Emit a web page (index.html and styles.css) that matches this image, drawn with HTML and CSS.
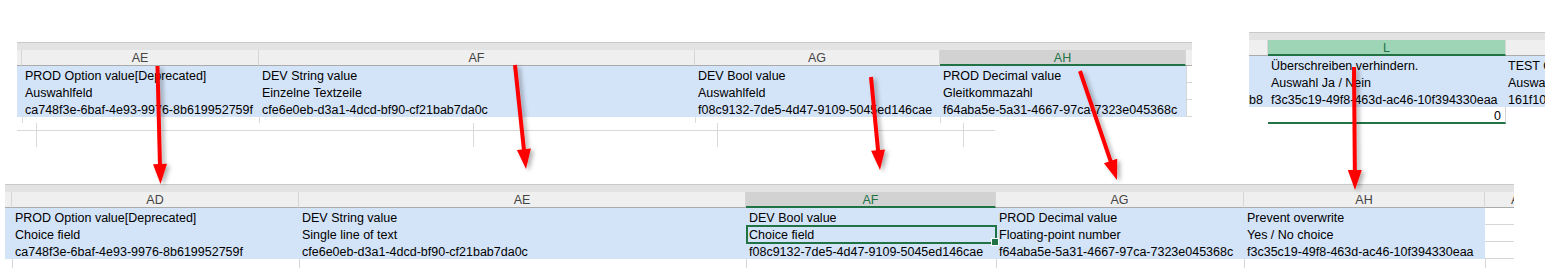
FILE: index.html
```html
<!DOCTYPE html>
<html lang="de">
<head>
<meta charset="utf-8">
<title>Column mapping</title>
<link rel="stylesheet" href="styles.css">
</head>
<body>
<div class="top">
  <section class="sheet sheet-a">
    <div class="band"></div>
    <div class="grid grid-a">
      <div class="hc"></div>
      <div class="hc">AE</div>
      <div class="hc">AF</div>
      <div class="hc">AG</div>
      <div class="hc hc-sel">AH</div>
      <div class="hc hc-plain"></div>

      <div class="c s"></div>
      <div class="c s">PROD Option value[Deprecated]</div>
      <div class="c s">DEV String value</div>
      <div class="c s">DEV Bool value</div>
      <div class="c s">PROD Decimal value</div>
      <div class="c gl"></div>

      <div class="c s"></div>
      <div class="c s">Auswahlfeld</div>
      <div class="c s">Einzelne Textzeile</div>
      <div class="c s">Auswahlfeld</div>
      <div class="c s">Gleitkommazahl</div>
      <div class="c gl"></div>

      <div class="c s"></div>
      <div class="c s">ca748f3e-6baf-4e93-9976-8b619952759f</div>
      <div class="c s">cfe6e0eb-d3a1-4dcd-bf90-cf21bab7da0c</div>
      <div class="c s">f08c9132-7de5-4d47-9109-5045ed146cae</div>
      <div class="c s">f64aba5e-5a31-4667-97ca-7323e045368c</div>
      <div class="c gl"></div>
    </div>
    <div class="below">
      <div class="ticks"><span></span><span></span><span></span><span></span><span></span></div>
      <div class="lower">
        <span></span><span></span><span></span><span></span><span></span>
        <span></span><span></span><span></span><span></span><span></span>
      </div>
    </div>
  </section>

  <section class="sheet sheet-b">
    <div class="band"></div>
    <div class="grid grid-b">
      <div class="hc"></div>
      <div class="hc hc-green">L</div>
      <div class="hc hc-plain"></div>

      <div class="c s"></div>
      <div class="c s">Überschreiben verhindern.</div>
      <div class="c s clip">TEST Option</div>

      <div class="c s"></div>
      <div class="c s">Auswahl Ja / Nein</div>
      <div class="c s clip">Auswahlfeld</div>

      <div class="c s right">b8</div>
      <div class="c s">f3c35c19-49f8-463d-ac46-10f394330eaa</div>
      <div class="c s clip">161f10ab-2c3d</div>

      <div class="c"></div>
      <div class="c num">0</div>
      <div class="c"></div>
    </div>
  </section>
</div>

<section class="sheet sheet-c">
  <div class="band"></div>
  <div class="grid grid-c">
    <div class="hc"></div>
    <div class="hc">AD</div>
    <div class="hc">AE</div>
    <div class="hc hc-sel">AF</div>
    <div class="hc">AG</div>
    <div class="hc">AH</div>
    <div class="hc hc-cut">AI</div>

    <div class="c s"></div>
    <div class="c s">PROD Option value[Deprecated]</div>
    <div class="c s">DEV String value</div>
    <div class="c s">DEV Bool value</div>
    <div class="c s">PROD Decimal value</div>
    <div class="c s">Prevent overwrite</div>
    <div class="c hl"></div>

    <div class="c s"></div>
    <div class="c s">Choice field</div>
    <div class="c s">Single line of text</div>
    <div class="c s active">Choice field</div>
    <div class="c s">Floating-point number</div>
    <div class="c s">Yes / No choice</div>
    <div class="c hl"></div>

    <div class="c s"></div>
    <div class="c s">ca748f3e-6baf-4e93-9976-8b619952759f</div>
    <div class="c s">cfe6e0eb-d3a1-4dcd-bf90-cf21bab7da0c</div>
    <div class="c s">f08c9132-7de5-4d47-9109-5045ed146cae</div>
    <div class="c s">f64aba5e-5a31-4667-97ca-7323e045368c</div>
    <div class="c s">f3c35c19-49f8-463d-ac46-10f394330eaa</div>
    <div class="c hl"></div>

    <div class="c"></div>
    <div class="c vl"></div>
    <div class="c vl"></div>
    <div class="c vl"></div>
    <div class="c vl"></div>
    <div class="c vl"></div>
    <div class="c vl"></div>
  </div>
</section>

<svg class="arrows" width="1550" height="268" viewBox="0 0 1550 268" aria-hidden="true">
  <defs>
    <filter id="shadow" x="-50%" y="-10%" width="200%" height="130%">
      <feDropShadow dx="3" dy="2" stdDeviation="2" flood-color="#000" flood-opacity="0.3"/>
    </filter>
  </defs>
  <g filter="url(#shadow)" fill="#ff0000" stroke="#ff0000">
    <line x1="157.5" y1="66" x2="160.1" y2="170" stroke-width="4"/>
    <polygon points="160.5,184 153,164.2 167,163.8" stroke="none"/>

    <line x1="515" y1="65" x2="524.5" y2="155" stroke-width="4"/>
    <polygon points="526,169 516.9,149.9 530.9,148.4" stroke="none"/>

    <line x1="871" y1="77" x2="878.6" y2="156" stroke-width="4"/>
    <polygon points="880,170 871.1,150.8 885,149.4" stroke="none"/>

    <line x1="1080" y1="71" x2="1112.5" y2="166.7" stroke-width="4"/>
    <polygon points="1117,180 1103.9,163.3 1117.2,158.8" stroke="none"/>

    <line x1="1354" y1="67" x2="1354.9" y2="176" stroke-width="4"/>
    <polygon points="1355,190 1347.8,170.1 1361.8,169.9" stroke="none"/>
  </g>
</svg>
</body>
</html>
```

FILE: styles.css
```css
* {
  box-sizing: border-box;
}

html,
body {
  margin: 0;
}

body {
  position: relative;
  width: 1550px;
  height: 268px;
  overflow: hidden;
  background: #ffffff;
  font-family: "Liberation Sans", Arial, sans-serif;
  font-size: 12.5px;
  color: #000000;
}

.top {
  display: flex;
  align-items: flex-start;
  height: 184px;
  padding-top: 32px;
}

.sheet-a {
  width: 1175px;
  margin: 10px 0 0 17px;
}

.sheet-b {
  width: 296px;
  margin-left: 57px;
}

.sheet-c {
  width: 1509px;
  margin-left: 5px;
}

.band {
  height: 8px;
  background: #e3e3e3;
  border-top: 1px solid #c9c9c9;
}

.grid {
  display: grid;
  grid-template-rows: 16px;
  grid-auto-rows: 17px;
}

.grid-a {
  grid-template-columns: 5px 237px 436px 245px 246px 6px;
}

.grid-b {
  grid-template-columns: 19px 238px 39px;
}

.grid-c {
  grid-template-columns: 7px 287px 447px 250px 248px 241px 29px;
}

.hc {
  background: #efefef;
  border-right: 1px solid #d6d6d6;
  border-bottom: 1px solid #ababab;
  color: #444444;
  text-align: center;
  padding-top: 1px;
  line-height: 14px;
  white-space: nowrap;
  overflow: hidden;
}

.hc-plain {
  border-right: none;
}

.hc-sel {
  background: #d2d2d2;
  color: #217346;
  border-bottom: 2px solid #217346;
}

.hc-green {
  background: #9fd5b7;
  color: #217346;
  border-bottom: 2px solid #217346;
}

.hc-cut {
  border-right: none;
  text-align: left;
  padding-left: 26px;
}

.c {
  padding-left: 3px;
  padding-top: 2px;
  line-height: 16px;
  white-space: nowrap;
  overflow: hidden;
}

.s {
  background: #d3e3f8;
}

.clip {
  padding-left: 2px;
}

.right {
  padding-right: 6px;
  padding-left: 0;
  text-align: right;
}

.num {
  padding-right: 4px;
  padding-left: 0;
  text-align: right;
  line-height: 15px;
  border-right: 1px solid #d4d4d4;
  border-bottom: 2px solid #217346;
}

.gl {
  border-left: 1px solid #d6d6d6;
  border-bottom: 1px solid #d6d6d6;
}

.hl {
  border-bottom: 1px solid #d6d6d6;
}

.vl {
  border-left: 1px solid #d6d6d6;
}

.active {
  position: relative;
  overflow: visible;
}

.active::before {
  content: "";
  position: absolute;
  left: 0;
  top: 0;
  right: -1px;
  bottom: -2px;
  border: 2px solid #217346;
}

.active::after {
  content: "";
  position: absolute;
  right: -3px;
  bottom: -4px;
  width: 6px;
  height: 6px;
  background: #217346;
  border: 1px solid #ffffff;
}

.below {
  height: 30px;
}

.ticks {
  display: grid;
  grid-template-columns: 5px 237px 436px 245px 246px;
  height: 6px;
}

.ticks span + span {
  border-left: 1px solid #d9d9d9;
}

.lower {
  display: grid;
  grid-template-columns: 19px 437px 244px 246px 32px;
  grid-template-rows: 8px 16px;
  width: 978px;
}

.lower span {
  border-left: 1px solid #d9d9d9;
}

.lower span:nth-child(5n + 1) {
  border-left: none;
}

.lower span:nth-child(-n + 5) {
  border-bottom: 1px solid #d9d9d9;
}

.arrows {
  position: absolute;
  top: 0;
  left: 0;
  pointer-events: none;
}
```
